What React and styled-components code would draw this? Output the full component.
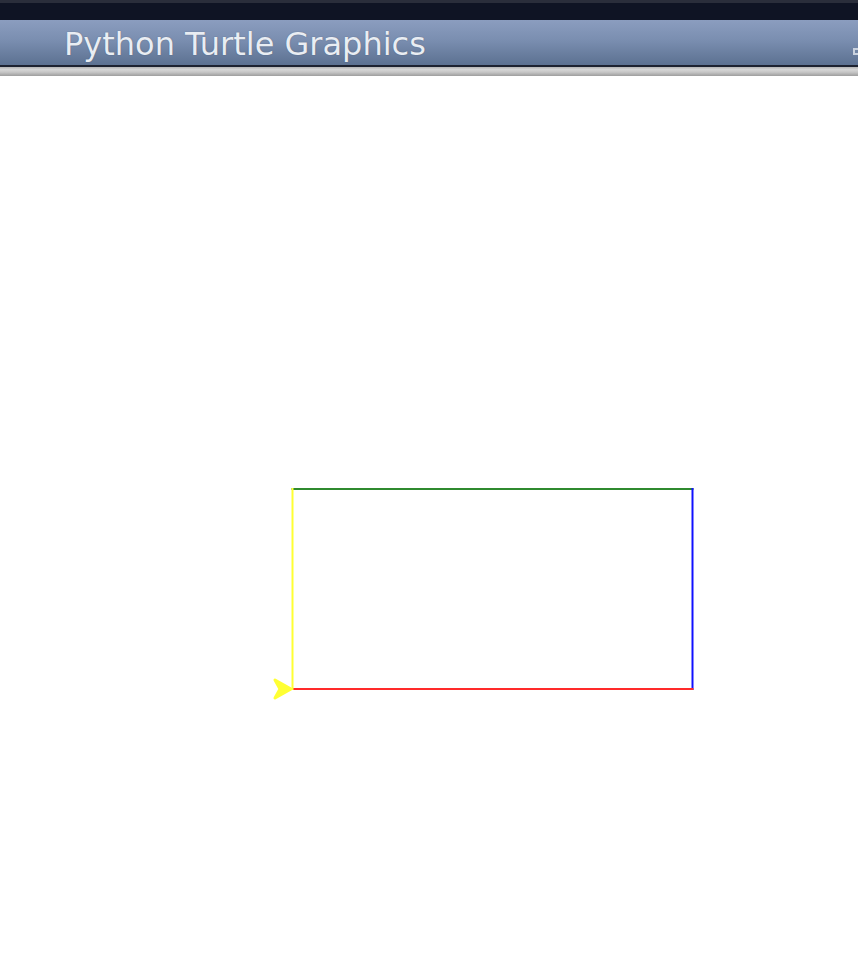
import React from "react";
import styled, { createGlobalStyle } from "styled-components";

const GlobalStyle = createGlobalStyle`
  html, body {
    margin: 0;
    padding: 0;
    background: #ffffff;
    overflow: hidden;
  }
`;

const Window = styled.div`
  display: flex;
  flex-direction: column;
  width: 858px;
  height: 974px;
  background: #ffffff;
`;

const TopStrip = styled.div`
  height: 17px;
  border-top: 3px solid #2a2e3b;
  background: #0f1424;
`;

const TitleBar = styled.div`
  display: flex;
  align-items: center;
  justify-content: space-between;
  height: 45px;
  padding-left: 64px;
  overflow: hidden;
  background: linear-gradient(to bottom, #8b9dbf 0%, #7a8eb0 45%, #5c7191 100%);
  border-bottom: 2px solid #1d2230;
`;

const Title = styled.span`
  font-family: "DejaVu Sans", "Liberation Sans", sans-serif;
  font-size: 32px;
  line-height: 1;
  color: #e9edf3;
  margin-top: 2px;
  text-shadow: 0 0 1px rgba(30, 40, 60, 0.5);
`;

const CornerButton = styled.div`
  width: 9px;
  height: 7px;
  margin-top: 18px;
  margin-right: -4px;
  box-sizing: border-box;
  border: 2px solid #c9d1de;
  background: #7084a4;
`;

const Shelf = styled.div`
  height: 9px;
  background: linear-gradient(
    to bottom,
    #b5b5b5 0%,
    #d6d6d6 30%,
    #c4c4c4 60%,
    #9e9e9e 100%
  );
`;

const Canvas = styled.div`
  flex: 1;
  background: #ffffff;
`;

const Drawing = styled.svg`
  display: block;
`;

const segments = [
  { x1: 292.5, y1: 413, x2: 692.5, y2: 413, color: "#2f8a2f" },
  { x1: 692.5, y1: 413, x2: 692.5, y2: 613, color: "#1010ff" },
  { x1: 692.5, y1: 613, x2: 292.5, y2: 613, color: "#ff2a2a" },
  { x1: 292.5, y1: 613, x2: 292.5, y2: 413, color: "#ffff33" },
];

export default function App() {
  return (
    <Window>
      <GlobalStyle />
      <TopStrip />
      <TitleBar>
        <Title>Python Turtle Graphics</Title>
        <CornerButton />
      </TitleBar>
      <Shelf />
      <Canvas>
        <Drawing width="858" height="898" viewBox="0 0 858 898">
          {segments.map((s, i) => (
            <line
              key={i}
              x1={s.x1}
              y1={s.y1}
              x2={s.x2}
              y2={s.y2}
              stroke={s.color}
              strokeWidth="2"
              strokeLinecap="square"
            />
          ))}
          <polygon
            points="291,613 275,604 280,613 275,622"
            fill="#ffff33"
            stroke="#ffff33"
            strokeWidth="3"
            strokeLinejoin="round"
          />
        </Drawing>
      </Canvas>
    </Window>
  );
}
